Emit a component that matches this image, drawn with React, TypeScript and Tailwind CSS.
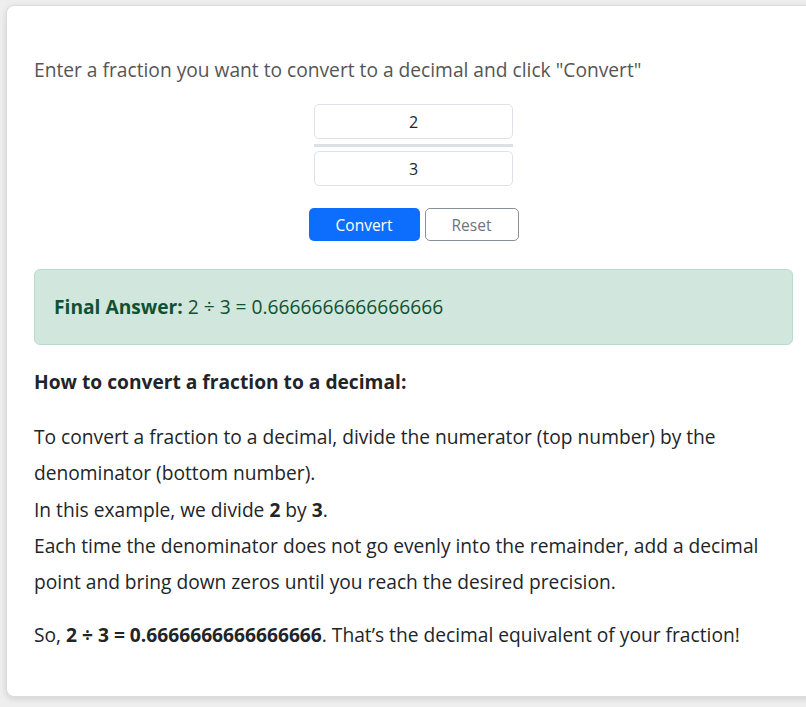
export default function App() {
  return (
    <div
      className="flex w-[806px] h-[707px] overflow-hidden bg-[#eeeeee] pl-[6px] pt-[5px]"
      style={{ fontFamily: '"Open Sans", "Noto Sans", sans-serif' }}
    >
      <div className="shrink-0 w-[820px] min-w-[820px] h-[692px] bg-white rounded-[8px] border border-[#dcdcdc] shadow-[0_2px_6px_rgba(0,0,0,0.12)] pl-[27px] pt-[46px]">
        <div className="w-[759px]">
          <p className="text-[19.2px] leading-[36px] text-[#555555]">
            Enter a fraction you want to convert to a decimal and click "Convert"
          </p>

          <div className="mt-[16px] flex flex-col items-center">
            <div className="w-[199px]">
              <input
                readOnly
                value="2"
                className="block w-full h-[35px] rounded-[5px] border border-[#dee2e6] bg-white text-center text-[16px] text-[#212529] outline-none"
              />
              <div className="mt-[5px] h-[3px] w-full bg-[#dcdfe3]" />
              <input
                readOnly
                value="3"
                className="mt-[4px] block w-full h-[35px] rounded-[5px] border border-[#dee2e6] bg-white text-center text-[16px] text-[#212529] outline-none"
              />
            </div>
            <div className="mt-[22px] flex gap-[5px]">
              <button className="w-[111px] h-[33px] rounded-[5px] bg-[#0d6efd] pt-[2px] text-white text-[15.5px] leading-none">
                Convert
              </button>
              <button className="w-[94px] h-[33px] rounded-[5px] border border-[#8a8f94] bg-white pt-[2px] text-[#6c757d] text-[15.5px] leading-none">
                Reset
              </button>
            </div>
          </div>

          <div className="mt-[28px] rounded-[6px] border border-[#badbcc] bg-[#d1e7dd] px-[19px] py-[19px] text-[19.2px] leading-[36px] text-[#0f5132]">
            <span className="font-bold">Final Answer:</span> 2 ÷ 3 = 0.6666666666666666
          </div>

          <h3 className="mt-[19px] text-[19.2px] leading-[36px] font-bold text-[#212529]">
            How to convert a fraction to a decimal:
          </h3>

          <p className="mt-[19px] text-[19.2px] leading-[36.3px] text-[#212529]">
            <span className="block">
              To convert a fraction to a decimal, divide the numerator (top number) by the
            </span>
            <span className="block">denominator (bottom number).</span>
            <span className="block">
              In this example, we divide <b>2</b> by <b>3</b>.
            </span>
            <span className="block">
              Each time the denominator does not go evenly into the remainder, add a decimal
            </span>
            <span className="block">
              point and bring down zeros until you reach the desired precision.
            </span>
          </p>

          <p className="mt-[17px] text-[19.2px] leading-[36px] text-[#212529]">
            So, <b>2 ÷ 3 = 0.6666666666666666</b>. That’s the decimal equivalent of your fraction!
          </p>
        </div>
      </div>
    </div>
  );
}
